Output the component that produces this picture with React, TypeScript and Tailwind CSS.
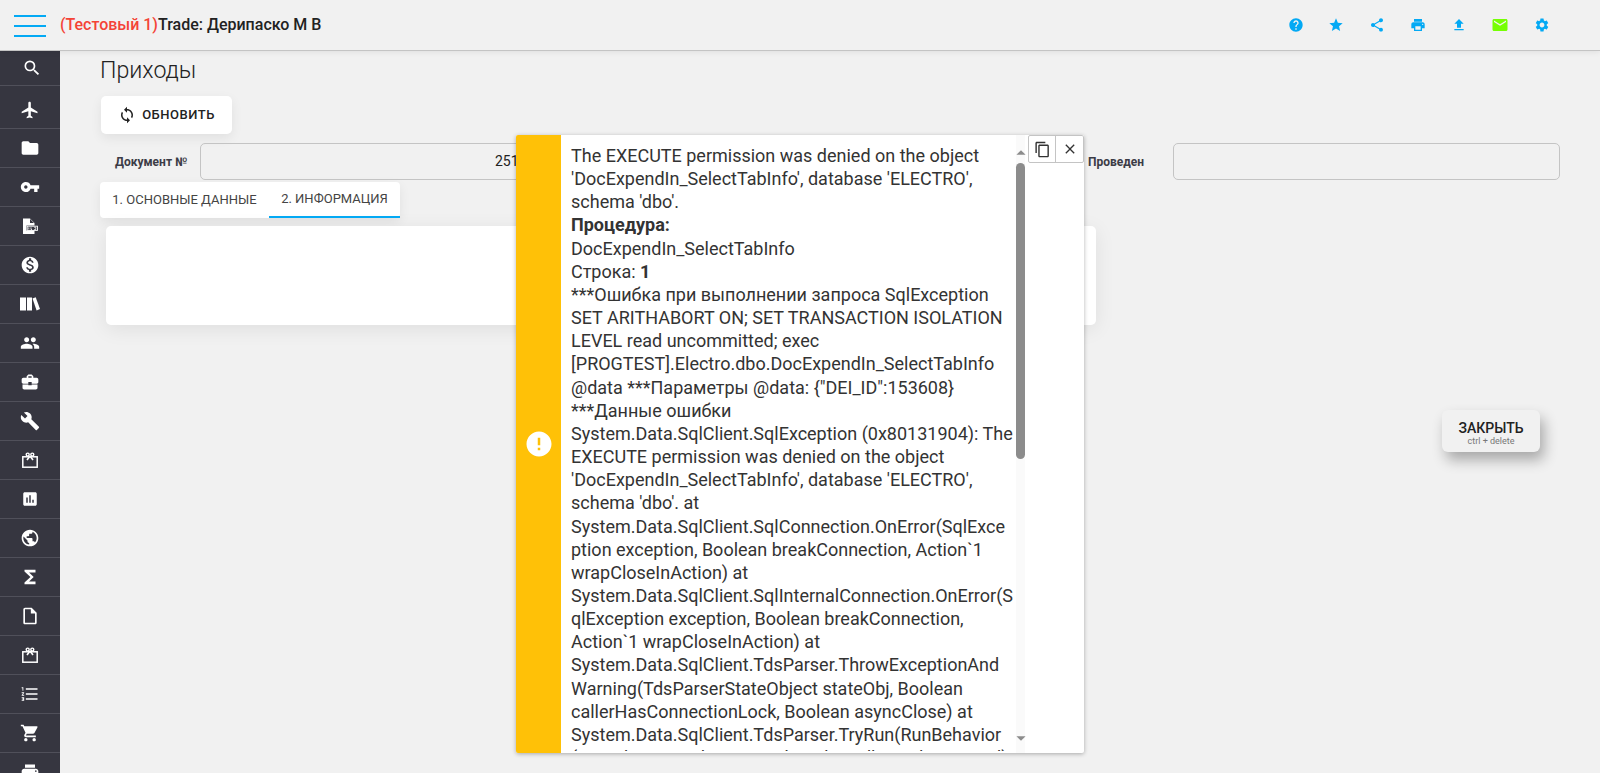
import React from "react";
import {
  MdSearch, MdFlight, MdFolder, MdVpnKey, MdMonetizationOn, MdPeople, MdBusinessCenter, MdBuild,
  MdAssessment, MdPublic, MdOutlineInsertDriveFile, MdFormatListNumbered, MdShoppingCart, MdPrint,
  MdHelp, MdStar, MdShare, MdFileUpload, MdEmail, MdSettings, MdLoop, MdContentCopy, MdClose, MdError,
  MdArrowDropUp, MdArrowDropDown, MdFunctions,
} from "react-icons/md";

function Books() {
  return (
    <svg width="20" height="14" viewBox="0 0 20 14" fill="currentColor">
      <rect x="0" y="0.5" width="6" height="13" />
      <rect x="7" y="0.5" width="5" height="13" />
      <path d="M12.5 1.5l3.2-1.3 4.3 11.8-3.4 1.6z" />
    </svg>
  );
}

function Gift() {
  return (
    <svg width="16" height="16" viewBox="0 0 16 16" fill="none" stroke="currentColor">
      <rect x="0.8" y="4.8" width="14.4" height="10.4" strokeWidth="1.5" />
      <circle cx="5.7" cy="2.6" r="1.5" strokeWidth="1.4" />
      <circle cx="10.3" cy="2.6" r="1.5" strokeWidth="1.4" />
      <path d="M8 4L5 8M8 4l3 4" strokeWidth="1.6" />
    </svg>
  );
}

function XlsFile() {
  return (
    <svg width="16" height="16" viewBox="0 0 16 16" fill="currentColor">
      <path d="M1 0.5h7l4.5 4.5v2.5H4.5v5h8v3.5H1z" fillRule="evenodd" />
      <path d="M8 1l0 4 4 0z" fill="#363640" />
      <rect x="5.2" y="8.2" width="10.3" height="4.2" fill="none" stroke="currentColor" strokeWidth="0.9" />
      <path d="M6.8 9.3v2.2M9 9.3v2.2h1M12.2 9.3h1.6v2.2h-1.6" fill="none" stroke="currentColor" strokeWidth="0.8" />
    </svg>
  );
}

const rows: { icon: React.ReactNode; cls: string }[] = [
  { icon: <MdSearch size={20} className="ml-[4px]" />, cls: "h-[35px]" },
  { icon: <MdFlight size={20} />, cls: "h-[43px] pt-[5px]" },
  { icon: <MdFolder size={20} />, cls: "h-[39px]" },
  { icon: <MdVpnKey size={20} />, cls: "h-[39px]" },
  { icon: <XlsFile />, cls: "h-[39px]" },
  { icon: <MdMonetizationOn size={20} />, cls: "h-[39px]" },
  { icon: <Books />, cls: "h-[39px]" },
  { icon: <MdPeople size={20} />, cls: "h-[39px]" },
  { icon: <MdBusinessCenter size={20} />, cls: "h-[39px]" },
  { icon: <MdBuild size={20} />, cls: "h-[39px]" },
  { icon: <Gift />, cls: "h-[39px]" },
  { icon: <MdAssessment size={18} />, cls: "h-[39px]" },
  { icon: <MdPublic size={20} />, cls: "h-[39px]" },
  { icon: <MdFunctions size={22} />, cls: "h-[39px]" },
  { icon: <MdOutlineInsertDriveFile size={20} />, cls: "h-[39px]" },
  { icon: <Gift />, cls: "h-[39px]" },
  { icon: <MdFormatListNumbered size={20} />, cls: "h-[39px]" },
  { icon: <MdShoppingCart size={20} />, cls: "h-[39px]" },
  { icon: <MdPrint size={20} />, cls: "h-[39px]" },
];

const top = [MdHelp, MdStar, MdShare, MdPrint, MdFileUpload];

export default function App() {
  return (
    <div className="relative h-[773px] w-[1600px] overflow-hidden bg-[#f1f1f1] font-['Roboto',sans-serif] text-[#222]">
      <header className="relative z-10 flex h-[51px] items-center border-b border-[#c4c4c4] bg-[#f1f1f1] shadow-[0_1px_6px_rgba(0,0,0,0.08)]">
        <div className="ml-[14px] mt-[2px] flex h-[22px] w-[32px] flex-col justify-between">
          <span className="h-[2px] bg-[#03a9f4]" />
          <span className="h-[2px] bg-[#03a9f4]" />
          <span className="h-[2px] bg-[#03a9f4]" />
        </div>
        <div className="ml-[14px] text-[16px] font-medium">
          <span className="text-[#f44336]">(Тестовый 1)</span>Trade: Дерипаско М В
        </div>
        <div className="ml-auto mr-[50px] flex items-center gap-[24.75px] text-[#03a9f4]">
          {top.map((I, i) => (
            <I key={i} size={16} />
          ))}
          <MdEmail size={18} className="text-[#76ff03]" />
          <MdSettings size={16} />
        </div>
      </header>
      <div className="flex">
        <nav className="h-[722px] w-[60px] shrink-0 overflow-hidden bg-[#363640] text-white">
          {rows.map((r, i) => (
            <div key={i} className={`flex items-center justify-center border-b border-[#50505a] ${r.cls}`}>
              {r.icon}
            </div>
          ))}
        </nav>
        <main className="flex-1 pl-[41px]">
          <h1 className="-ml-px mt-[5px] text-[23.2px] leading-[28px] font-light text-[#222]">Приходы</h1>
          <button className="mt-[12px] flex h-[38px] w-[131px] items-center justify-center gap-[6px] rounded-[5px] bg-white text-[13px] font-medium tracking-[0.5px] shadow-[0_4px_12px_rgba(0,0,0,0.07)]">
            <MdLoop size={18} />
            ОБНОВИТЬ
          </button>
          <div className="mt-[9px] flex h-[37px] items-center">
            <span className="ml-[14px] w-[85px] text-[12px] font-bold text-[#3c3c46]">Документ №</span>
            <div className="flex h-[37px] w-[855px] items-center rounded-[5px] border border-[#c4c4c4] pl-[294px] text-[14px] text-[#222]">
              251608
            </div>
            <span className="ml-[33px] w-[85px] text-[12px] font-bold text-[#3c3c46]">Проведен</span>
            <div className="h-[37px] w-[387px] rounded-[5px] border border-[#c4c4c4]" />
          </div>
          <div className="-ml-px mt-[2px] flex h-[36px] w-[300px] rounded-[4px] bg-white text-[13px] text-[#444] shadow-[0_4px_12px_rgba(0,0,0,0.07)]">
            <div className="flex w-[169px] items-center justify-center">1. ОСНОВНЫЕ ДАННЫЕ</div>
            <div className="flex w-[131px] items-center justify-center border-b-2 border-[#03a9f4]">2. ИНФОРМАЦИЯ</div>
          </div>
          <div className="mt-[8px] ml-[5px] h-[99px] w-[990px] rounded-[5px] bg-white shadow-[0_4px_20px_rgba(0,0,0,0.08)]" />
        </main>
      </div>

      <button className="absolute left-[1442px] top-[410px] flex h-[42px] w-[98px] flex-col items-center rounded-[6px] bg-[#f1f1f1] pt-[11px] shadow-[4px_8px_14px_rgba(0,0,0,0.3)]">
        <span className="text-[14px] leading-[15px] font-medium">ЗАКРЫТЬ</span>
        <span className="text-[9px] leading-[10px] text-[#777]">ctrl + delete</span>
      </button>

      <div className="absolute left-[516px] top-[135px] z-20 flex h-[618px] w-[568px] overflow-hidden rounded-[2px] bg-white shadow-[0_1px_4px_rgba(0,0,0,0.3)]">
        <div className="flex w-[45px] shrink-0 items-center justify-center bg-[#ffc107]">
          <MdError size={30} className="text-white" />
        </div>
        <div className="h-[616px] w-[455px] shrink-0 overflow-hidden pl-[10px] pr-[2px] pt-[9px] text-[18px] leading-[23.15px] [overflow-wrap:anywhere] text-[#333]">
          The EXECUTE permission was denied on the object 'DocExpendIn_SelectTabInfo', database 'ELECTRO', schema 'dbo'.
          <br />
          <b className="font-bold">Процедура:</b>
          <br />
          DocExpendIn_SelectTabInfo
          <br />
          Строка: <b className="font-bold">1</b>
          <br />
          ***Ошибка при выполнении запроса SqlException SET ARITHABORT ON; SET TRANSACTION ISOLATION LEVEL read uncommitted; exec [PROGTEST].Electro.dbo.DocExpendIn_SelectTabInfo @data ***Параметры @data: {'{"DEI_ID":153608}'}
          <br />
          ***Данные ошибки
          <br />
          System.Data.SqlClient.SqlException (0x80131904): The EXECUTE permission was denied on the object 'DocExpendIn_SelectTabInfo', database 'ELECTRO', schema 'dbo'. at System.Data.SqlClient.SqlConnection.OnError(SqlException exception, Boolean breakConnection, Action`1 wrapCloseInAction) at System.Data.SqlClient.SqlInternalConnection.OnError(SqlException exception, Boolean breakConnection, Action`1 wrapCloseInAction) at System.Data.SqlClient.TdsParser.ThrowExceptionAndWarning(TdsParserStateObject stateObj, Boolean callerHasConnectionLock, Boolean asyncClose) at System.Data.SqlClient.TdsParser.TryRun(RunBehavior (runBehavior, SqlCommand cmdHandler, SqlDataRead)
        </div>
        <div className="relative h-full w-[9px] shrink-0 bg-[#fafafa]">
          <MdArrowDropUp size={22} className="absolute left-[-6.5px] top-[7px] text-[#8c8c8c]" />
          <div className="absolute left-0 top-[28px] h-[296px] w-[9px] rounded-full bg-[#8c8c8c]" />
          <MdArrowDropDown size={22} className="absolute left-[-6.5px] top-[592px] text-[#8c8c8c]" />
        </div>
        <div className="ml-[3px] flex h-[28px] w-[56px] shrink-0 rounded-[2px] border border-[#c4c4c4] bg-white text-[#333]">
          <div className="flex w-[27px] items-center justify-center border-r border-[#c4c4c4]">
            <MdContentCopy size={17} />
          </div>
          <div className="flex flex-1 items-center justify-center">
            <MdClose size={16} />
          </div>
        </div>
      </div>
    </div>
  );
}
